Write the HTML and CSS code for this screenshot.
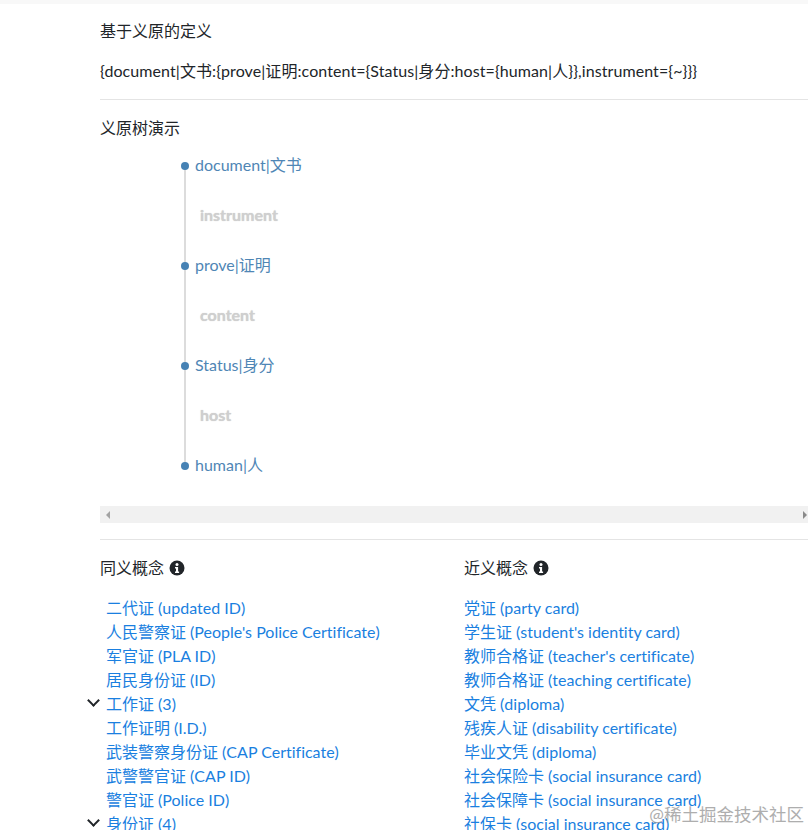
FILE: index.html
```html
<!DOCTYPE html>
<html lang="zh">
<head>
  <meta charset="UTF-8" />
  <title>义原树演示</title>
  <link rel="stylesheet" href="styles.css">
</head>
<body>

<div class="franja"></div>

<main class="contenido">
  <section class="definicion">
    <h4 class="titulo">基于义原的定义</h4>
    <p class="def-texto">{document|文书:{prove|证明:content={Status|身分:host={human|人}},instrument={~}}}</p>
  </section>

  <section class="arbol-caja">
    <h4 class="titulo">义原树演示</h4>
    <ul class="arbol">
      <li class="nodo">document|文书</li>
      <li class="rama">instrument</li>
      <li class="nodo">prove|证明</li>
      <li class="rama">content</li>
      <li class="nodo">Status|身分</li>
      <li class="rama">host</li>
      <li class="nodo">human|人</li>
    </ul>
    <div class="barra">
      <span class="flecha-izq"></span>
      <span class="flecha-der"></span>
    </div>
  </section>

  <section class="conceptos">
    <div class="columna col-sin">
      <h4 class="titulo">同义概念
        <svg class="info" viewBox="0 0 16 16"><circle cx="8" cy="8" r="7.5" fill="#212529"/><circle cx="8" cy="4.4" r="1.5" fill="#fff"/><path d="M6 7h3.1v4.6h1v1.4H6v-1.4h1V8.4H6z" fill="#fff"/></svg>
      </h4>
      <ul class="lista">
        <li><a href="#">二代证 (updated ID)</a></li>
        <li><a href="#">人民警察证 (People's Police Certificate)</a></li>
        <li><a href="#">军官证 (PLA ID)</a></li>
        <li><a href="#">居民身份证 (ID)</a></li>
        <li class="abierto"><a href="#">工作证 (3)</a></li>
        <li><a href="#">工作证明 (I.D.)</a></li>
        <li><a href="#">武装警察身份证 (CAP Certificate)</a></li>
        <li><a href="#">武警警官证 (CAP ID)</a></li>
        <li><a href="#">警官证 (Police ID)</a></li>
        <li class="abierto"><a href="#">身份证 (4)</a></li>
      </ul>
    </div>
    <div class="columna">
      <h4 class="titulo">近义概念
        <svg class="info" viewBox="0 0 16 16"><circle cx="8" cy="8" r="7.5" fill="#212529"/><circle cx="8" cy="4.4" r="1.5" fill="#fff"/><path d="M6 7h3.1v4.6h1v1.4H6v-1.4h1V8.4H6z" fill="#fff"/></svg>
      </h4>
      <ul class="lista">
        <li><a href="#">党证 (party card)</a></li>
        <li><a href="#">学生证 (student's identity card)</a></li>
        <li><a href="#">教师合格证 (teacher's certificate)</a></li>
        <li><a href="#">教师合格证 (teaching certificate)</a></li>
        <li><a href="#">文凭 (diploma)</a></li>
        <li><a href="#">残疾人证 (disability certificate)</a></li>
        <li><a href="#">毕业文凭 (diploma)</a></li>
        <li><a href="#">社会保险卡 (social insurance card)</a></li>
        <li><a href="#">社会保障卡 (social insurance card)</a></li>
        <li><a href="#">社保卡 (social insurance card)</a></li>
      </ul>
    </div>
  </section>
</main>

<div class="marca">@稀土掘金技术社区</div>

</body>
</html>
```

FILE: styles.css
```css
html, body {
  height: 830px;
  overflow: hidden;
}

body {
  margin: 0;
  background: #fff;
  color: #212529;
  font-family: "Lato", "Noto Sans CJK SC", sans-serif;
  font-size: 16px;
  line-height: 24px;
  font-variant-ligatures: none;
}

.franja {
  height: 4px;
  background: #f8f8f8;
}

.contenido {
  padding-left: 100px;
}

.titulo {
  margin: 0;
  font-size: 16px;
  font-weight: 400;
  line-height: 24px;
}

.definicion {
  padding: 15px 0 16px;
  border-bottom: 1px solid #e4e4e4;
}

.def-texto {
  margin: 16px 0 0;
  letter-spacing: 0.08px;
}

.arbol-caja {
  padding: 16px 0 16px;
  border-bottom: 1px solid #e4e4e4;
}

.arbol {
  position: relative;
  list-style: none;
  margin: 0;
  padding: 0 0 0 95px;
}

.arbol::before {
  content: "";
  position: absolute;
  left: 84px;
  top: 25px;
  bottom: 25px;
  width: 2px;
  background: #dcdcdc;
}

.arbol li {
  height: 50px;
  line-height: 50px;
}

.nodo {
  position: relative;
  color: #4f86b5;
}

.nodo::before {
  content: "";
  position: absolute;
  left: -14px;
  top: 22px;
  width: 8px;
  height: 8px;
  border-radius: 50%;
  background: #4682b4;
}

.rama {
  padding-left: 5px;
  color: #cfcfcf;
  font-weight: 700;
  text-shadow: 0 0 1px #ccc;
}

.barra {
  position: relative;
  height: 17px;
  margin-top: 16px;
  background: #f1f1f1;
}

.flecha-izq, .flecha-der {
  position: absolute;
  top: 5px;
  width: 0;
  height: 0;
  border-top: 4px solid transparent;
  border-bottom: 4px solid transparent;
}

.flecha-izq {
  left: 6px;
  border-right: 4px solid #a3a3a3;
}

.flecha-der {
  right: 1px;
  border-left: 4px solid #8a8a8a;
}

.conceptos {
  display: grid;
  grid-template-columns: 364px 1fr;
  padding-top: 16px;
}

.info {
  width: 16px;
  height: 16px;
  margin-left: 1px;
  vertical-align: -2px;
}

.lista {
  list-style: none;
  margin: 16px 0 0;
  padding: 0;
  white-space: nowrap;
}

.col-sin .lista {
  padding-left: 6px;
}

.lista a {
  color: #1a7fe0;
  text-decoration: none;
}

.abierto {
  position: relative;
}

.abierto::before {
  content: "";
  position: absolute;
  left: -17px;
  top: 4px;
  width: 7px;
  height: 7px;
  border-right: 2.5px solid #212529;
  border-bottom: 2.5px solid #212529;
  transform: rotate(45deg);
}

.marca {
  position: absolute;
  right: 4px;
  top: 803px;
  font-size: 17.5px;
  color: #9a9a9a;
  opacity: 0.8;
}
```
